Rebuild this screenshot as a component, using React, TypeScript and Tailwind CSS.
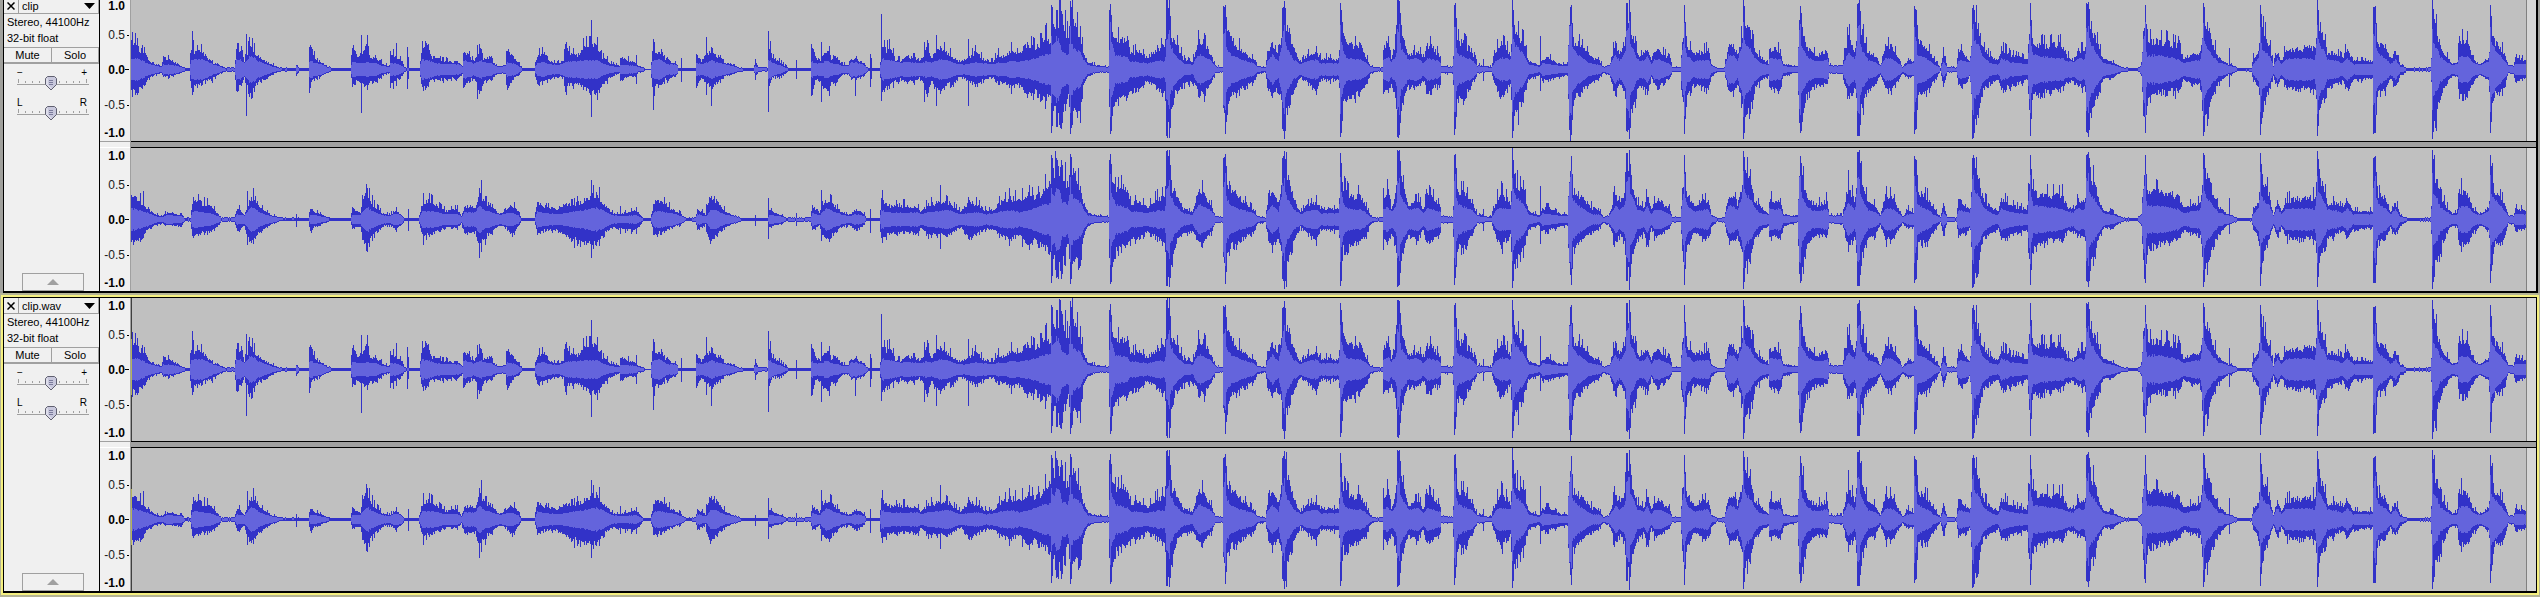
import React from "react";

type Point = [number, number, number, number];

const CLIP_WIDTH = 2395;
const HEIGHT = 143;
const MIDDLE = 71;

// Envelope points: position, peak above, peak below, RMS level.
const LEFT_INTRO = `0 38 27 11;7 26 26 11;14 18 15 7;19 9 9 5;26 5 5 3;30 3 3 2;32 14 8 5;42 10 7 4;51 3 3 2;54 1 1 1;58 1 1 1;60 26 22 10;64 20 18 10;70 22 16 10;76 15 12 8;81 8 11 5;87 6 6 3;92 2 2 1;103 2 2 1;105 22 24 10;109 23 18 10;113 10 9 6;118 27 29 13;121 27 29 13;126 17 16 9;132 10 12 6;142 5 5 2;148 2 2 1;164 1 1 0;165 6 7 3;168 1 1 0;177 1 1 1;178 28 30 8;180 28 14 9;182 16 11 7;189 9 8 5;196 3 3 2;202 1 1 1;219 1 1 1;221 32 19 8;226 13 12 6;236 30 20 7;239 16 15 6;245 15 15 6;251 7 6 3;258 4 4 2;259 20 20 6;265 15 13 6;271 9 7 3;273 3 3 2;275 1 1 1;288 1 1 1;290 22 18 8;291 30 22 10;296 33 22 9;299 17 12 8;306 13 12 6;312 10 11 5;327 9 11 5;331 4 5 3;332 24 23 9;336 19 15 8;342 10 10 6;350 25 27 9;352 12 15 7;360 16 11 6;362 8 9 4;367 4 5 3;374 5 5 3;376 25 25 7;382 15 11 6;387 8 7 3;391 1 1 1;403 1 1 1;406 17 19 6;413 20 13 7;419 10 12 5;426 7 8 4;432 10 9 6;434 34 29 7;437 20 15 8;446 17 18 8;452 26 20 9;456 29 23 9;466 28 30 9;471 14 15 6;474 14 14 5;479 7 8 3;488 4 4 2;489 15 14 4;497 11 8 4;505 9 9 3;507 3 3 2;512 3 2 1;514 0 0 0;519 0 0 0;521 20 20 8;525 19 18 10;531 23 18 9;534 12 11 6;536 14 16 5;540 9 9 5;546 6 6 4;547 1 1 0;564 1 1 0;565 20 22 6;570 9 10 5;581 27 24 9;584 13 16 7;589 18 13 6;594 7 7 5;602 6 5 3;607 2 2 1;622 1 1 1;624 9 9 3;627 3 2 1;636 2 2 1;637 26 26 9;639 24 14 9;642 13 8 6;649 9 9 4;657 1 1 0;679 1 1 0;680 34 32 8;684 14 12 6;689 11 14 6;696 25 27 9;700 14 17 6;705 16 16 6;711 6 5 3;717 5 5 3;720 12 11 7;729 11 10 6;734 4 5 3;737 1 1 1;741 1 1 0;748 1 1 1;751 26 26 11;755 24 20 9;759 27 19 9;764 12 13 8;770 10 11 6;773 16 15 7;780 15 14 7;790 10 10 6;795 28 30 8;800 14 14 7;809 26 27 10;817 20 17 9;822 15 19 7;827 9 9 5;835 12 11 5;844 21 18 7;852 12 13 6;861 9 9 5;867 18 16 7;874 15 15 6;880 24 20 9;887 18 16 7`;

const RIGHT_INTRO = `0 30 26 11;4 28 27 10;9 22 24 9;17 13 11 6;23 6 7 3;31 3 4 2;36 9 7 4;50 5 7 3;54 1 1 0;59 2 2 1;61 18 19 8;66 22 17 8;79 17 15 6;87 6 7 3;90 2 2 1;103 2 2 1;106 14 15 5;113 6 7 4;119 25 29 12;123 27 24 11;130 13 13 6;140 5 5 3;150 2 1 1;177 1 1 0;179 14 16 4;183 9 8 4;193 4 4 2;199 1 1 0;219 1 1 0;221 14 11 4;229 7 8 4;231 26 25 8;236 31 32 12;242 18 19 8;250 8 9 4;258 5 6 3;264 11 11 6;270 6 7 4;273 1 1 0;287 1 1 0;290 15 15 7;292 22 22 8;299 22 17 8;307 15 12 7;315 10 9 5;326 12 9 5;330 4 4 2;333 16 18 7;344 15 14 7;348 30 30 14;354 20 22 9;360 18 15 7;368 6 7 4;374 12 9 6;381 17 18 6;387 9 7 4;390 1 1 0;403 1 1 0;406 21 18 8;415 14 12 6;426 13 13 5;434 18 19 6;442 17 24 8;452 23 28 9;465 32 31 12;472 20 19 9;481 8 9 4;489 7 11 3;505 10 12 4;512 1 1 0;519 1 1 0;523 22 19 8;528 24 16 8;540 13 10 6;550 6 5 3;555 1 1 0;564 2 2 1;566 12 12 5;574 6 6 3;576 19 18 4;579 30 30 10;587 20 15 8;595 8 8 4;607 3 3 2;611 1 1 0;636 1 1 0;638 11 9 4;647 6 6 3;655 2 2 1;679 2 2 1;681 17 13 6;688 9 7 4;695 24 27 11;700 21 19 9;706 13 12 6;717 5 6 3;725 12 13 5;733 6 5 3;735 1 1 0;748 1 1 0;750 26 24 9;757 17 18 7;774 17 14 6;786 14 18 7;790 9 9 5;796 18 19 7;806 20 18 8;817 20 18 9;829 9 8 5;838 21 22 6;845 19 17 7;855 10 11 5;863 12 12 6;870 22 20 8;878 26 23 9;888 24 18 7`;

const BODY = `896 31 32 9;904 26 24 11;910 32 34 14;915 40 33 15;919 30 34 16;920 65 64 33;923 58 48 25;925 60 58 32;930 60 60 22;934 50 45 16;936 42 30 15;939 67 64 42;944 56 50 20;949 37 52 18;952 23 20 10;956 8 8 4;962 6 4 3;969 4 3 2;977 3 3 2;978 60 38 20;979 66 65 45;981 48 60 25;984 36 38 15;991 38 32 13;996 38 33 12;999 20 25 8;1007 22 24 7;1016 14 14 6;1026 26 22 9;1033 28 28 8;1035 70 67 30;1038 70 68 40;1041 38 50 20;1044 35 28 14;1052 13 17 6;1061 8 14 4;1064 22 20 10;1068 37 28 15;1072 33 29 13;1079 20 18 9;1084 4 4 3;1091 2 3 2;1092 62 38 35;1094 66 65 45;1096 45 45 20;1101 38 30 13;1105 30 30 12;1112 22 21 9;1122 12 16 6;1126 4 5 2;1134 2 3 1;1136 20 18 8;1141 33 33 15;1147 20 23 8;1149 35 35 18;1151 62 60 35;1153 69 70 45;1157 50 50 20;1162 27 28 10;1169 8 8 5;1176 17 15 8;1185 20 26 10;1189 14 12 6;1207 12 12 6;1209 68 67 45;1211 52 60 25;1212 40 36 18;1215 33 38 12;1222 28 30 10;1229 30 26 10;1234 17 22 7;1239 4 5 2;1244 2 2 1;1251 2 2 1;1252 27 26 10;1257 37 28 12;1260 15 20 8;1264 30 30 12;1266 70 68 38;1268 70 66 45;1272 38 35 18;1277 18 20 10;1287 23 22 11;1292 13 12 6;1296 30 27 11;1302 26 22 10;1309 15 18 7;1310 4 4 3;1321 3 4 2;1323 65 66 40;1324 67 60 45;1327 35 35 15;1332 32 34 13;1341 22 18 9;1346 5 4 3;1360 3 2 1;1364 20 18 8;1369 34 32 12;1379 20 20 10;1381 70 68 45;1386 42 50 22;1393 32 30 14;1397 10 11 5;1408 5 7 2;1411 13 14 6;1417 14 12 5;1429 6 8 3;1436 6 6 3;1438 50 60 45;1440 65 66 48;1442 35 40 20;1446 33 32 15;1454 22 20 9;1461 14 15 5;1467 13 12 5;1472 3 4 2;1478 5 6 4;1484 33 30 14;1488 20 17 9;1493 33 28 15;1495 67 62 40;1498 70 70 47;1501 42 46 22;1506 20 25 10;1512 15 17 8;1516 29 32 13;1520 12 9 5;1523 25 20 10;1531 20 18 9;1538 13 9 5;1541 3 3 2;1549 2 2 1;1551 35 38 20;1553 65 65 46;1556 30 35 14;1562 18 17 8;1577 24 24 10;1580 6 9 3;1586 1 2 1;1593 2 3 2;1597 28 26 14;1602 28 26 14;1606 20 20 9;1610 37 38 22;1612 70 70 47;1618 48 48 22;1623 25 24 12;1629 15 14 6;1637 7 8 4;1638 25 22 11;1649 23 23 10;1652 6 8 3;1666 4 3 2;1668 55 64 40;1669 64 64 48;1671 50 60 22;1675 30 33 14;1681 20 22 9;1686 17 18 8;1696 24 18 10;1698 5 4 3;1711 5 5 3;1717 43 33 17;1723 22 22 10;1726 67 67 45;1728 70 67 45;1732 38 38 18;1737 20 23 9;1744 17 19 7;1749 5 6 3;1754 28 23 11;1760 27 24 11;1767 14 13 6;1771 3 4 2;1777 12 10 5;1782 9 8 6;1783 64 64 45;1785 60 60 30;1787 36 30 14;1796 26 27 10;1802 13 15 5;1809 2 2 1;1812 19 19 7;1816 3 3 2;1825 2 2 1;1827 24 18 9;1834 17 18 8;1838 11 9 7;1841 60 68 45;1842 66 69 45;1847 50 55 25;1852 25 21 12;1861 13 16 5;1867 11 12 5;1870 26 24 11;1879 17 18 7;1896 12 12 5;1898 50 52 30;1899 65 66 48;1902 35 34 15;1909 30 30 13;1919 30 25 12;1931 30 23 11;1936 16 14 8;1942 12 14 7;1947 24 20 11;1953 22 20 10;1955 65 62 40;1957 68 68 46;1961 50 50 24;1967 28 26 13;1972 12 11 6;1982 8 9 4;1991 2 2 1;2006 1 1 1;2010 6 6 4;2012 45 55 30;2014 65 64 48;2016 35 35 14;2026 34 28 14;2036 33 27 13;2047 28 24 10;2052 14 13 6;2061 18 17 8;2068 20 18 9;2072 68 68 48;2076 55 55 22;2081 35 34 14;2087 15 17 7;2096 7 7 4;2107 1 1 1;2120 1 2 1;2122 14 12 5;2127 22 22 12;2129 65 66 46;2133 42 38 18;2138 32 24 14;2142 5 7 4;2146 22 21 11;2150 10 9 5;2154 23 20 10;2164 25 24 11;2176 27 22 11;2183 28 26 10;2186 70 67 48;2192 40 36 20;2196 20 25 10;2204 20 18 9;2211 14 12 6;2216 26 24 11;2222 10 12 5;2241 10 10 5;2242 62 64 35;2244 64 64 45;2247 30 27 16;2254 28 25 11;2259 10 9 5;2264 22 21 10;2269 5 7 2;2276 1 1 1;2299 2 2 1;2301 70 70 45;2306 44 50 20;2309 28 35 12;2316 15 14 7;2321 6 7 4;2326 9 8 5;2328 36 32 13;2337 32 30 13;2342 12 14 6;2349 6 6 4;2357 14 12 8;2359 65 64 45;2364 33 30 20;2372 22 26 10;2377 5 4 3;2382 4 5 3;2384 13 13 5;2395 11 10 5`;

// Single-column transients: position, above, below.
const LEFT_SPIKES = `1 37 27;6 31 25;61 38 25;62 29 22;115 35 46;230 34 43;236 34 20;265 26 16;276 22 19;277 12 9;346 24 29;452 31 20;460 49 47;505 14 14;522 30 40;523 27 26;550 11 12;575 32 25;580 22 36;637 38 42;665 9 9;690 27 32;724 11 26;739 15 17;740 11 9;750 55 31;793 27 32;805 34 36;837 30 36;880 27 24;1352 10 11;1409 33 21;2098 21 17`;
const RIGHT_SPIKES = `12 28 18;116 28 25;165 5 7;236 31 32;277 10 11;348 31 38;350 39 32;460 39 38;489 13 14;505 12 14;624 4 6;637 21 19;665 6 6;690 29 21;739 10 13;809 34 29;878 31 26;1352 10 11;1409 33 24;2098 21 14`;

const KICK = 58;

const parse = (text: string) => text.split(";").map((p) => p.split(" ").map(Number));

function noise(x: number, seed: number) {
  let n = Math.imul(x + 1, 374761393) + Math.imul(seed, 668265263);
  n = Math.imul(n ^ (n >>> 13), 1274126177);
  return ((n ^ (n >>> 16)) >>> 0) / 4294967296;
}

// Ragged peak height: mostly just below the envelope, now and then above it.
function ragged(x: number, seed: number) {
  const n = noise(x, seed);
  return 0.66 + 0.3 * n + (n > 0.86 ? 0.22 : 0);
}

function buildPaths(envelope: string, spikeText: string, seed: number) {
  const points = parse(envelope) as Point[];
  const spikes = new Map(parse(spikeText).map((s) => [s[0], s]));
  let peak = "";
  let rms = "";
  let i = 0;
  for (let x = 0; x < CLIP_WIDTH; x++) {
    while (i < points.length - 2 && points[i + 1][0] <= x) i++;
    const a = points[i];
    const b = points[i + 1];
    let t = (x - a[0]) / (b[0] - a[0]);
    let tRms = t;
    const inKick = a[1] > KICK && x - a[0] < 2;
    // Kicks strike in a column or two and fall away steeply.
    if (a[1] > KICK && b[1] < a[1]) {
      t = Math.pow(t, 0.65);
      tRms = Math.pow(t, 0.35);
    } else if (b[1] > KICK) {
      t = Math.pow(t, 2.2);
      tRms = t;
    }
    const at = (k: number, w: number) => a[k] + (b[k] - a[k]) * w;
    const above = ragged(x, seed);
    const below = 0.5 * above + 0.5 * ragged(x, seed + 1);
    let up = at(1, t) * (inKick ? 0.92 + 0.08 * above : above);
    let down = at(2, t) * (inKick ? 0.92 + 0.08 * below : below);
    const spike = spikes.get(x);
    if (spike) {
      up = spike[1];
      down = spike[2];
    }
    const level = at(3, tRms) * (0.88 + 0.16 * noise(x, seed + 2));
    up = Math.min(MIDDLE, Math.round(up));
    down = Math.min(MIDDLE, Math.round(down));
    const ru = Math.min(Math.round(level), Math.max(0, up - 1));
    const rd = Math.min(Math.round(level), Math.max(0, down - 1));
    peak += `M${x} ${MIDDLE - up}h1v${up + down + 1}h-1z`;
    if (ru + rd > 0) rms += `M${x} ${MIDDLE - ru}h1v${ru + rd + 1}h-1z`;
  }
  return { peak, rms };
}

const LEFT = buildPaths(`${LEFT_INTRO};${BODY}`, LEFT_SPIKES, 3);
const RIGHT = buildPaths(`${RIGHT_INTRO};${BODY}`, RIGHT_SPIKES, 17);

function Waveform({ data, label, selected }: { data: { peak: string; rms: string }; label: string; selected: boolean }) {
  return (
    <svg
      role="img"
      aria-label={label}
      viewBox={`0 0 ${CLIP_WIDTH} ${HEIGHT}`}
      preserveAspectRatio="none"
      shapeRendering="crispEdges"
      className="block h-[143px] w-full min-w-0 flex-1 bg-[#c0c0c0]"
    >
      <path d={data.peak} fill="#3232c8" />
      <path d={data.rms} fill="#6464dc" />
      {selected && (
        <>
          <path d="M0 0h1v143h-1z" fill="#404040" />
          <path d="M0 41h1v56h-1z" fill="#b4b45a" />
        </>
      )}
    </svg>
  );
}

function Channel({ data, label, selected }: { data: { peak: string; rms: string }; label: string; selected: boolean }) {
  return (
    <div className="flex">
      <Waveform data={data} label={label} selected={selected} />
      <div className="w-[10px] border-l border-[#808080] bg-[#d6d6d6]" />
    </div>
  );
}

function Mark({ text, row, tick, bold }: { text: string; row: string; tick: string; bold?: boolean }) {
  return (
    <div className={`flex items-center justify-end ${row}`}>
      <span className={bold ? "font-bold text-black" : "text-[#202020]"}>{text}</span>
      <span className={`h-px bg-black ${tick}`} />
    </div>
  );
}

function Ruler() {
  return (
    <div className="h-[143px] pr-px text-[12px] leading-[10px]">
      <Mark text="1.0" row="h-[15px] pr-[4px]" tick="w-0" bold />
      <Mark text="0.5" row="h-[44px]" tick="ml-[2px] w-[2px]" />
      <Mark text="0.0" row="h-[25px]" tick="w-[4px]" bold />
      <Mark text="-0.5" row="h-[46px]" tick="ml-[2px] w-[2px]" />
      <Mark text="-1.0" row="h-[10px] pr-[4px]" tick="w-0" bold />
    </div>
  );
}

function Slider({ name, low, high }: { name: string; low: string; high: string }) {
  return (
    <div className="h-[24px]">
      <div className="flex h-[12px] justify-between pr-[12px] pl-[13px] text-[10px] leading-[12px] text-black">
        <span>{low}</span>
        <span>{high}</span>
      </div>
      <div className="relative -mt-[3px] ml-[13px] h-[15px] w-[73px]">
        <svg viewBox="0 0 73 15" className="block h-[15px] w-[73px]" aria-hidden="true">
          <g fill="#a0a0a0" shapeRendering="crispEdges">
            <path d="M0 8h72v1H0z" />
            <path d="M1 3h1v4h-1zM8 5h1v2h-1zM15 5h1v2h-1zM22 5h1v2h-1zM42 5h1v2h-1zM49 5h1v2h-1zM56 5h1v2h-1zM62 5h1v2h-1zM69 3h1v4h-1z" />
          </g>
          <path d="M30.5 .5h7l2 2v6l-5.500 5.500-5.500-5.500v-6z" fill="#c8c8dc" stroke="#606070" />
          <path d="M30 2.500v6l4 4" fill="none" stroke="#f4f4fa" />
          <path d="M32 4.500h4M32 6.500h4M32 8.500h4" stroke="#7c7c9c" />
        </svg>
        <input
          type="range"
          aria-label={name}
          defaultValue={50}
          className="absolute inset-0 m-0 h-full w-full cursor-pointer opacity-0"
        />
      </div>
    </div>
  );
}

function ControlPanel({ name }: { name: string }) {
  return (
    <div className="flex w-[96px] shrink-0 flex-col border-r border-black bg-[#f0f0f0] text-[11px] text-black">
      <div className="flex h-[16px] border-r border-b border-[#a0a0a0]">
        <button aria-label={`Close ${name}`} className="flex w-[15px] items-center justify-center border-r border-[#a0a0a0]">
          <svg viewBox="0 0 8 8" className="h-[8px] w-[8px]" aria-hidden="true">
            <path d="M.5 .5l7 7M7.500 .5l-7 7" stroke="#000" strokeWidth="1.500" />
          </svg>
        </button>
        <button className="flex flex-1 items-center justify-between pr-[3px] pl-[3px] leading-[14px]">
          <span>{name}</span>
          <svg viewBox="0 0 11 6" className="h-[6px] w-[11px]" aria-hidden="true">
            <path d="M0 0h11l-5.500 6z" />
          </svg>
        </button>
      </div>
      <div className="h-[33px] pl-[3px] leading-[16px]">
        <div>Stereo, 44100Hz</div>
        <div>32-bit float</div>
      </div>
      <div className="flex h-[17px] border-t border-r border-b-2 border-[#a0a0a0] leading-[14px]">
        <button className="w-[48px] border-r border-[#a0a0a0]">Mute</button>
        <button className="flex-1">Solo</button>
      </div>
      <div className="flex flex-col gap-[6px] pt-[3px]">
        <Slider name={`${name} gain`} low="−" high="+" />
        <Slider name={`${name} pan`} low="L" high="R" />
      </div>
      <button
        aria-label={`Collapse ${name}`}
        className="mt-auto ml-[18px] flex h-[18px] w-[62px] items-center justify-center border border-[#a0a0a0]"
      >
        <svg viewBox="0 0 12 6" className="h-[6px] w-[12px]" aria-hidden="true">
          <path d="M6 0l6 6H0z" fill="#a0a0a0" />
        </svg>
      </button>
    </div>
  );
}

function Track({ name, selected = false }: { name: string; selected?: boolean }) {
  return (
    <section
      aria-label={name}
      className={`ml-[3px] flex border-t border-b-2 border-l border-black ${
        selected
          ? "mr-[3px] border-r shadow-[0_0_0_2px_#f5f080,0_0_0_4px_#b4b496]"
          : "mr-[2px] border-r-2"
      }`}
    >
      <ControlPanel name={name} />
      <div className="w-[31px] shrink-0 border-r border-[#a0a0a0] bg-[#f0f0f0]">
        <Ruler />
        <div className="h-[7px] border-t border-b border-t-[#a0a0a0] border-b-white" />
        <Ruler />
      </div>
      <div className="min-w-0 flex-1">
        <Channel data={LEFT} label={`${name} left channel`} selected={selected} />
        <div className="h-[7px] border-y border-black bg-[#a0a0a0]" />
        <Channel data={RIGHT} label={`${name} right channel`} selected={selected} />
      </div>
    </section>
  );
}

export default function App() {
  return (
    <main className="h-screen overflow-hidden bg-[#a0a09c] font-['Liberation_Sans',Arial,sans-serif]">
      <div className="-mt-[3px] flex flex-col gap-[4px]">
        <Track name="clip" />
        <Track name="clip.wav" selected />
      </div>
    </main>
  );
}
